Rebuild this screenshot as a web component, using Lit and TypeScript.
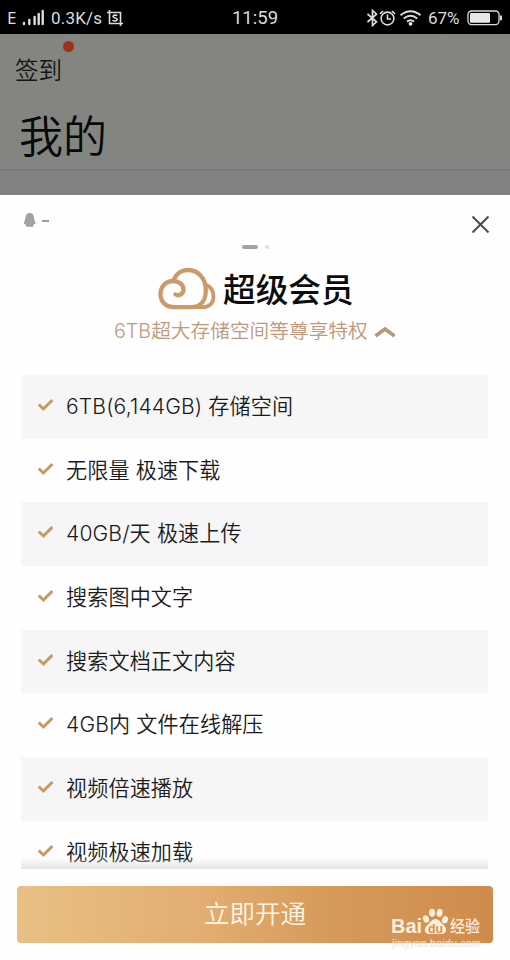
import { LitElement, html, css, svg } from "lit";
import { customElement, property } from "lit/decorators.js";

const FEATURES = [
  "6TB(6,144GB) 存储空间",
  "无限量 极速下载",
  "40GB/天 极速上传",
  "搜索图中文字",
  "搜索文档正文内容",
  "4GB内 文件在线解压",
  "视频倍速播放",
  "视频极速加载",
];

@customElement("status-bar")
class StatusBar extends LitElement {
  static styles = css`
    :host {
      display: grid;
      grid-template-columns: 1fr auto 1fr;
      align-items: center;
      height: 34px;
      background: #000;
      color: #dcdcdc;
      font: 400 17px/34px Roboto, "Noto Sans CJK SC", sans-serif;
    }
    .side { display: flex; align-items: center; height: 34px; }
    .left { padding-left: 7px; }
    .right { justify-content: flex-end; padding-right: 8px; }
    .net { font-size: 17px; font-family: "Noto Sans", sans-serif; width: 12px; }
    .bars { margin-left: 3px; }
    .speed { margin-left: 7px; width: 51px; white-space: nowrap; letter-spacing: 0.2px; }
    .shot { margin-left: 5px; }
    .time { font-size: 18.5px; padding-top: 1px; }
    .pct { margin: 0 5px 0 7px; font-size: 17px; width: 34px; white-space: nowrap; }
    svg { display: block; flex: none; fill: none; stroke: #dcdcdc; }
    .solid { fill: #e8e8e8; stroke: none; }
  `;
  render() {
    return html`
      <div class="side left">
        <span class="net">E</span>
        <svg class="bars" width="22" height="18" viewBox="0 0 22 18" stroke-width="2.4" stroke-linecap="round">
          <path d="M2 14v1M7.3 11v4M12.6 8v7M16.7 5v10M20.7 2v13" />
        </svg>
        <span class="speed">0.3K/s</span>
        <svg class="shot" width="16" height="16" viewBox="0 0 16 16" stroke-width="1.6">
          <path d="M0 2.5H13.5V16M2.5 0V13.5H16" />
          <path d="M10.2 5.8C9.4 4.8 6 4.8 6 6.6S10.2 7.6 10.2 9.4S6.4 11.4 5.7 10" />
        </svg>
      </div>
      <div class="time">11:59</div>
      <div class="side right">
        <svg width="12" height="18" viewBox="0 0 12 18" stroke-width="1.7">
          <path d="M0.5 5L9.5 12.8L5.5 16.5V1.5L9.5 5.2L0.5 13" />
        </svg>
        <svg width="17" height="18" viewBox="0 0 17 18" stroke-width="1.6">
          <circle cx="8.5" cy="9.5" r="6.4" />
          <path d="M8.5 5.5V10H12M1 4.8L4.1 2M16 4.8L12.9 2" />
        </svg>
        <svg width="25" height="18" viewBox="0 0 25 18" stroke-width="2">
          <path d="M4.5 6.2Q14.5-1.8 24.5 6.2M7.8 9.5Q14.5 4 21.2 9.5M11 12.6Q14.5 9.8 18 12.6" />
          <circle class="solid" cx="14.5" cy="14.8" r="1.9" />
        </svg>
        <span class="pct">67%</span>
        <svg width="35" height="16" viewBox="0 0 35 16" stroke-width="1.3">
          <rect x="1" y="1" width="31" height="13.6" rx="3.5" />
          <rect class="solid" x="3" y="3" width="20" height="9.8" rx="1" />
          <path d="M34 5.4v4.8" stroke-width="2" />
        </svg>
      </div>`;
  }
}

@customElement("feature-row")
class FeatureRow extends LitElement {
  @property() label = "";
  static styles = css`
    :host { display: flex; align-items: center; height: 63.7px; padding-left: 16px; box-sizing: border-box; }
    .label {
      margin-left: 12px;
      font: 350 21.1px/30px Inter, "Noto Sans CJK SC", sans-serif;
      letter-spacing: 0.12px;
      color: #1b1b1b;
      white-space: pre;
    }
    svg { display: block; margin-top: -4px; }
  `;
  render() {
    return html`
      <svg width="17" height="14" viewBox="0 0 17 14" fill="none" stroke="#cb985f" stroke-width="3">
        <path d="M1.8 6.5L6.4 11L15.4 2" />
      </svg>
      <span class="label">${this.label}</span>`;
  }
}

@customElement("brand-watermark")
class BrandWatermark extends LitElement {
  static styles = css`
    :host { display: block; width: 96px; height: 50px; }
    svg { display: block; }
    .word { font: 700 20px "Liberation Sans", sans-serif; fill: #fdeedd; }
    .du { font: 700 12px "Liberation Sans", sans-serif; fill: #d39350; }
    .cn { font: 500 16px "Noto Sans CJK SC", sans-serif; fill: #fdeedd; }
    .url { font: 400 10.5px "Liberation Sans", sans-serif; fill: url(#fade); }
  `;
  render() {
    return svg`
      <svg width="96" height="50" viewBox="0 0 96 50">
        <defs>
          <linearGradient id="fade" gradientUnits="userSpaceOnUse" x1="0" y1="28" x2="0" y2="48">
            <stop offset="0.5" stop-color="#f7e6d4" />
            <stop offset="0.5" stop-color="#e6e6e6" />
          </linearGradient>
        </defs>
        <text class="word" x="1" y="28" textLength="31" lengthAdjust="spacingAndGlyphs">Bai</text>
        <g fill="#fdeedd">
          <ellipse cx="36" cy="14" rx="3" ry="3.8" transform="rotate(-20 36 14)" />
          <ellipse cx="42" cy="7.8" rx="3" ry="4" />
          <ellipse cx="49.6" cy="7.8" rx="3" ry="4" transform="rotate(12 49.6 7.8)" />
          <ellipse cx="55" cy="14.7" rx="3" ry="3.8" transform="rotate(20 55 14.7)" />
          <path d="M45.5 14C49 14 50 17 53 19.5C58 23.5 56.5 29 51.5 29C48 28.5 43 28.5 39.5 29C34 29 33 23.5 38 19.5C41 17 42 14 45.5 14Z" />
        </g>
        <text class="du" x="38" y="27.5" textLength="15" lengthAdjust="spacingAndGlyphs">du</text>
        <text class="cn" x="60" y="27" textLength="30" lengthAdjust="spacingAndGlyphs">经验</text>
        <text class="url" x="2" y="41.5" textLength="89" lengthAdjust="spacingAndGlyphs">jingyan.baidu.com</text>
      </svg>`;
  }
}

@customElement("app-root")
class AppRoot extends LitElement {
  static styles = css`
    :host {
      display: flex;
      flex-direction: column;
      width: 510px;
      height: 960px;
      overflow: hidden;
      background: #fefefe;
      font-family: Inter, "Noto Sans CJK SC", sans-serif;
      font-weight: 350;
    }
    .backdrop {
      height: 135px;
      background: #838581;
      border-bottom: 1px solid #747474;
      color: #080808;
      box-sizing: content-box;
      display: flex;
      flex-direction: column;
    }
    .signin { position: relative; align-self: flex-start; margin: 20px 0 0 15px; font-size: 23.5px; line-height: 34px; color: #151515; }
    .dot { position: absolute; left: 48px; top: -13px; width: 11px; height: 11px; border-radius: 50%; background: #9f3118; }
    .title { margin: 17px 0 0 19px; font-size: 44px; line-height: 64px; }
    .gap { height: 25px; background: #838083; }
    .sheet { flex: 1; display: flex; flex-direction: column; background: #fefefe; min-height: 0; }
    .top { display: flex; justify-content: space-between; padding: 17px 20px 0 23px; height: 24px; }
    .account { display: flex; gap: 6px; }
    .account .name { width: 7px; height: 2px; margin-top: 8px; background: #9c9c9c; }
    .pager { display: flex; justify-content: center; align-items: center; gap: 7px; height: 6px; margin: 8px 0 0 0; }
    .pager .on { width: 16px; height: 4px; border-radius: 2px; background: #a3a3a3; }
    .pager .off { width: 4px; height: 4px; border-radius: 2px; background: #e0e0e0; }
    .brand { display: flex; align-items: center; height: 44px; margin: 17px 0 0 157px; gap: 6px; }
    .brand-name { font: 500 32.7px/44px "Noto Sans CJK SC", sans-serif; color: #0c0c0c; margin-top: -2px; }
    .sub { display: flex; align-items: center; margin-left: 114px; height: 36px; color: #c1987a; font-size: 19.7px; gap: 6px; white-space: nowrap; }
    .sub svg { margin-top: 4px; }
    .list { position: relative; margin: 28px 22px 0 21px; height: 494px; overflow: hidden; flex: none; }
    feature-row:nth-child(odd) { background: #f6f6f6; }
    .fade { position: absolute; left: 0; right: 0; bottom: 0; height: 11px; background: linear-gradient(rgba(225, 225, 225, 0), #e3e3e3); }
    .cta {
      position: relative;
      margin: 17px 17px 0;
      height: 57px;
      flex: none;
      border-radius: 4px;
      background: linear-gradient(90deg, #e9c084, #e2ad70 40%, #d69a5a 66%, #cf8b4c);
      color: #fff6e4;
      font-size: 25.5px;
      line-height: 55px;
      text-align: center;
    }
    brand-watermark { position: absolute; left: 373px; top: 19px; line-height: normal; }
    svg { display: block; }
  `;
  render() {
    return html`
      <status-bar></status-bar>
      <div class="backdrop">
        <div class="signin">签到<span class="dot"></span></div>
        <div class="title">我的</div>
      </div>
      <div class="gap"></div>
      <div class="sheet">
        <div class="top">
          <div class="account">
            <svg width="13" height="16" viewBox="0 0 13 16" fill="#a2a2a2">
              <path d="M6.7 1C9.5 1 11 3 11 6C11 7.5 12.5 9 12.5 11.5C12.5 12.5 11.5 12.5 11 11.8C11 12.8 10.5 13 10.5 13.5C11 15 9 15 7 14.8C5 15 2.5 15 3 13.5C3 13 2.5 12.8 2.4 11.8C1.9 12.5 1 12.5 1 11.5C1 9 2.4 7.5 2.4 6C2.4 3 4 1 6.7 1Z" />
            </svg>
            <span class="name"></span>
          </div>
          <svg width="19" height="21" viewBox="0 0 19 21" stroke="#4b4b4f" stroke-width="2">
            <path d="M1.5 4.5L17.5 20.5M17.5 4.5L1.5 20.5" />
          </svg>
        </div>
        <div class="pager"><span class="on"></span><span class="off"></span></div>
        <div class="brand">
          <svg width="60" height="44" viewBox="0 0 60 44" fill="none" stroke="#cc9a69" stroke-width="4.3" stroke-linecap="round" stroke-linejoin="round">
            <path d="M18.5 27.5C22 29.5 26.5 27 26.5 22.5C26.5 17 21.5 14 16 14C8.5 14 3.5 20 3.5 27C3.5 35.5 9.5 40.2 16.5 40.2H34C44 40.2 48.8 33 48.8 23.5C48.8 11 41 3 31 3C24 3 18.5 7.5 16.5 14" />
            <path d="M34 40.2H45C53 40.2 56.5 35.5 56.5 29.5C56.5 24 53.5 19.5 48.5 17.5" stroke-width="3.8" />
          </svg>
          <span class="brand-name">超级会员</span>
        </div>
        <div class="sub">
          <span>6TB超大存储空间等尊享特权</span>
          <svg width="22" height="13" viewBox="0 0 22 13" fill="none" stroke="#b89679" stroke-width="3.6">
            <path d="M1.5 11L11 4L20.5 11" />
          </svg>
        </div>
        <div class="list">
          ${FEATURES.map((f) => html`<feature-row .label=${f}></feature-row>`)}
          <div class="fade"></div>
        </div>
        <div class="cta">立即开通<brand-watermark></brand-watermark></div>
      </div>`;
  }
}
